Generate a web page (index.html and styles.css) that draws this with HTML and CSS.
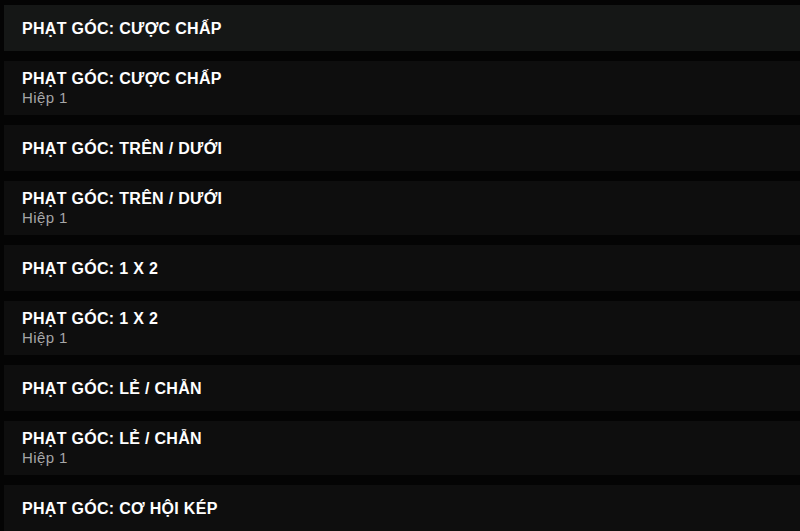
FILE: index.html
```html
<!DOCTYPE html>
<html lang="vi">
<head>
<meta charset="utf-8">
<link rel="stylesheet" href="styles.css">
</head>
<body>
<div class="list">
  <div class="row row-active"><div class="title">PHẠT GÓC: CƯỢC CHẤP</div></div>
  <div class="row row-sub"><div class="title">PHẠT GÓC: CƯỢC CHẤP</div><div class="sub">Hiệp 1</div></div>
  <div class="row"><div class="title">PHẠT GÓC: TRÊN / DƯỚI</div></div>
  <div class="row row-sub"><div class="title">PHẠT GÓC: TRÊN / DƯỚI</div><div class="sub">Hiệp 1</div></div>
  <div class="row"><div class="title">PHẠT GÓC: 1 X 2</div></div>
  <div class="row row-sub"><div class="title">PHẠT GÓC: 1 X 2</div><div class="sub">Hiệp 1</div></div>
  <div class="row"><div class="title">PHẠT GÓC: LẺ / CHẴN</div></div>
  <div class="row row-sub"><div class="title">PHẠT GÓC: LẺ / CHẴN</div><div class="sub">Hiệp 1</div></div>
  <div class="row"><div class="title">PHẠT GÓC: CƠ HỘI KÉP</div></div>
</div>
</body>
</html>
```
FILE: styles.css
```css
html, body {
  margin: 0;
  padding: 0;
  background: #040404;
  font-family: "Liberation Sans", Arial, sans-serif;
  overflow: hidden;
}
.list {
  display: flex;
  flex-direction: column;
  gap: 10px;
  padding: 5px 0 0 4px;
}
.row {
  height: 46px;
  box-sizing: border-box;
  background: #0e0e0e;
  display: flex;
  flex-direction: column;
  justify-content: center;
  padding: 0 18px;
}
.row-active {
  background: #151716;
}
.row-sub {
  height: 54px;
}
.title {
  color: #ffffff;
  font-weight: bold;
  font-size: 16px;
  letter-spacing: 0.3px;
  line-height: 19px;
}
.sub {
  color: #a6a6a6;
  font-size: 15px;
  letter-spacing: 0.4px;
  line-height: 19px;
}
```
